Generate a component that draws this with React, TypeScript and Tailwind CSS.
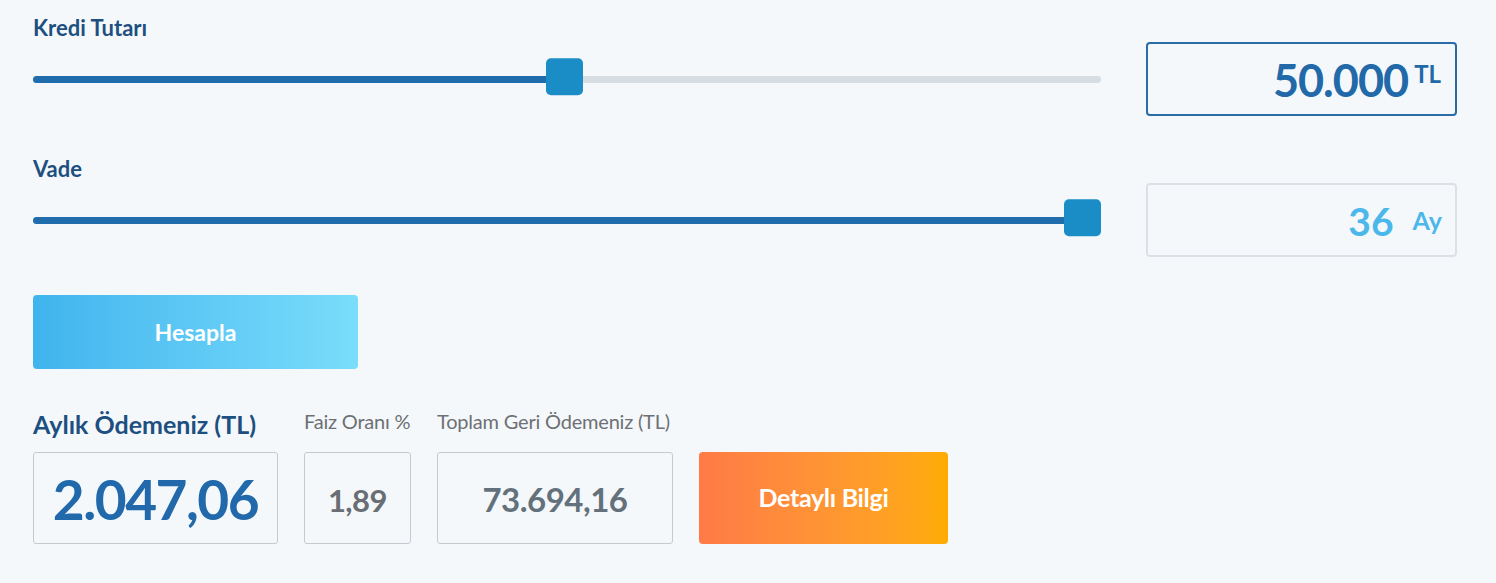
import React from 'react';

interface SliderRowProps {
    label: string;
    fraction: number;
    children: React.ReactNode;
    boxClass: string;
}

const THUMB = 37;
const TRACK = 1068;

const SliderRow: React.FC<SliderRowProps> = ({ label, fraction, children, boxClass }) => {
    const left = Math.round(fraction * (TRACK - THUMB));
    return (
        <div className="flex items-end gap-[45px]">
            <div className="w-[1068px] flex flex-col">
                <div className="h-[24px] mb-[2px] text-[22px] leading-[24px] font-bold text-[#1d4f80]">{label}</div>
                <div className="relative h-[74px] flex items-center">
                    <div className="relative w-full h-[7px] rounded-full bg-[#d6dde3]">
                        <div className="absolute left-0 top-0 h-[7px] rounded-full bg-[#1f6dac]" style={{ width: left + THUMB / 2 }} />
                    </div>
                    <div
                        className="absolute top-1/2 -translate-y-[56%] w-[37px] h-[37px] rounded-[5px] bg-[#1a8dc6]"
                        style={{ left }}
                    />
                </div>
            </div>
            <div className={boxClass}>{children}</div>
        </div>
    );
};

interface ResultProps {
    label: string;
    width: string;
    labelClass: string;
    children: React.ReactNode;
}

const Result: React.FC<ResultProps> = ({ label, width, labelClass, children }) => (
    <div className={`flex flex-col ${width}`}>
        <div className={labelClass}>{label}</div>
        <div className="h-[92px] rounded-[3px] border border-[#c6cacf] flex items-center justify-center">
            {children}
        </div>
    </div>
);

export default function App() {
    return (
        <div className="w-full h-[583px] bg-[#f5f8fb] pl-[33px] pt-[16px] font-['Lato',sans-serif]">
            <SliderRow
                label="Kredi Tutarı"
                fraction={0.4976}
                boxClass="w-[311px] h-[74px] rounded-[4px] border-2 border-[#2a6ca6] flex items-start justify-end pr-[14px] pt-[13px]"
            >
                <span className="text-[45px] leading-[46px] font-bold text-[#2169a8] tracking-[-1px]">50.000</span>
                <span className="ml-[6px] mt-[3px] text-[24px] leading-[28px] font-bold text-[#2169a8]">TL</span>
            </SliderRow>

            <div className="mt-[41px]">
                <SliderRow
                    label="Vade"
                    fraction={1}
                    boxClass="w-[311px] h-[74px] rounded-[4px] border-2 border-[#dbe1e6] flex items-center justify-end pr-[13px]"
                >
                    <span className="text-[39px] leading-[44px] font-bold text-[#4bb7ea] mt-[2px]">36</span>
                    <span className="ml-[19px] text-[25px] leading-[30px] font-bold text-[#4bb7ea]">Ay</span>
                </SliderRow>
            </div>

            <button className="mt-[38px] w-[325px] h-[74px] rounded-[4px] bg-gradient-to-r from-[#40b4ee] to-[#79ddfb] text-white text-[23px] font-bold">
                Hesapla
            </button>

            <div className="mt-[40px] flex items-end gap-[26px]">
                <Result
                    label="Aylık Ödemeniz (TL)"
                    width="w-[245px]"
                    labelClass="mb-[13px] text-[25px] leading-[30px] font-bold text-[#1d4f80] whitespace-nowrap"
                >
                    <span className="mt-[2px] text-[55px] font-bold text-[#2169ab] tracking-[-1.5px]">2.047,06</span>
                </Result>
                <Result
                    label="Faiz Oranı %"
                    width="w-[107px]"
                    labelClass="mb-[19px] text-[20px] leading-[24px] text-[#6d7074] whitespace-nowrap tracking-[-0.2px]"
                >
                    <span className="mt-[4px] text-[31px] font-bold text-[#686e74] tracking-[-0.5px]">1,89</span>
                </Result>
                <Result
                    label="Toplam Geri Ödemeniz (TL)"
                    width="w-[236px]"
                    labelClass="mb-[19px] text-[20px] leading-[24px] text-[#6d7074] whitespace-nowrap tracking-[-0.2px]"
                >
                    <span className="mt-[4px] text-[33px] font-bold text-[#63717c] tracking-[-0.5px]">73.694,16</span>
                </Result>
                <button className="w-[249px] h-[92px] rounded-[4px] bg-gradient-to-r from-[#ff7a46] to-[#ffac00] text-white text-[25px] font-bold tracking-[-0.3px]">
                    Detaylı Bilgi
                </button>
            </div>
        </div>
    );
}
